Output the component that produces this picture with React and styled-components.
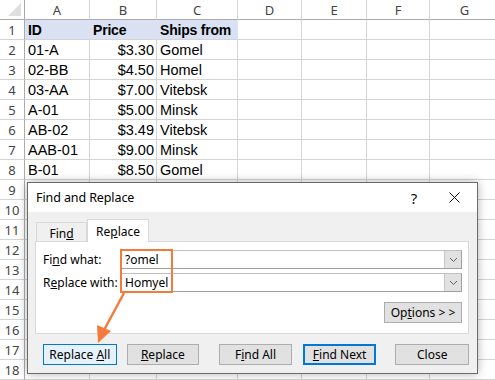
import styled, { createGlobalStyle } from 'styled-components'

const GlobalStyle = createGlobalStyle`
    html, body {
        margin: 0;
        padding: 0;
        background: #ffffff;
    }
    * {
        box-sizing: border-box;
    }
`

const columns = [
    { name: 'A', width: 65 },
    { name: 'B', width: 67 },
    { name: 'C', width: 81 },
    { name: 'D', width: 64 },
    { name: 'E', width: 65 },
    { name: 'F', width: 63 },
    { name: 'G', width: 70 },
]

const data = [
    ['01-A', '$3.30', 'Gomel'],
    ['02-BB', '$4.50', 'Homel'],
    ['03-AA', '$7.00', 'Vitebsk'],
    ['A-01', '$5.00', 'Minsk'],
    ['AB-02', '$3.49', 'Vitebsk'],
    ['AAB-01', '$9.00', 'Minsk'],
    ['B-01', '$8.50', 'Gomel'],
]

const Page = styled.div`
    position: relative;
    width: 495px;
    height: 380px;
    overflow: hidden;
    font-family: "Liberation Sans", Arial, sans-serif;
`

const Sheet = styled.div`
    display: grid;
    grid-template-columns: 25px ${columns.map(c => c.width + 'px').join(' ')};
    grid-auto-rows: 20px;
`

const Corner = styled.div`
    position: relative;
    border-right: 1px solid #ababab;
    border-bottom: 1px solid #ababab;
    &::after {
        content: '';
        position: absolute;
        right: 3px;
        bottom: 3px;
        border-left: 13px solid transparent;
        border-bottom: 13px solid #dfdfdf;
    }
`

const ColHead = styled.div`
    display: flex;
    align-items: center;
    justify-content: center;
    font-family: "Noto Sans", sans-serif;
    font-size: 13px;
    color: #444;
    border-right: 1px solid #d4d4d4;
    border-bottom: 1px solid #ababab;
`

const RowHead = styled.div`
    display: flex;
    align-items: center;
    justify-content: center;
    font-family: "Noto Sans", sans-serif;
    font-size: 13px;
    color: #444;
    border-right: 1px solid #ababab;
    border-bottom: 1px solid #d4d4d4;
`

const Cell = styled.div`
    display: flex;
    align-items: center;
    justify-content: ${p => (p.$right ? 'flex-end' : 'flex-start')};
    padding: 0 2px 0 3px;
    font-size: ${p => (p.$head ? 14 : 14.5)}px;
    font-weight: ${p => (p.$head ? 700 : 400)};
    letter-spacing: ${p => (p.$head ? -0.2 : 0)}px;
    color: #000;
    background: ${p => (p.$head ? '#d9e1f2' : '#fff')};
    border-right: 1px solid ${p => (p.$head ? '#d9e1f2' : '#d4d4d4')};
    border-bottom: 1px solid #d4d4d4;
    white-space: nowrap;
    overflow: hidden;
`

const Dialog = styled.div`
    position: absolute;
    left: 27px;
    top: 182px;
    width: 451px;
    height: 192px;
    background: #f0f0f0;
    border: 1px solid #6b6b6b;
    box-shadow: 0 0 9px rgba(0, 0, 0, 0.3);
    display: flex;
    flex-direction: column;
    font-family: "Noto Sans", "Segoe UI", sans-serif;
    font-size: 12px;
    color: #000;
`

const TitleBar = styled.div`
    height: 29px;
    background: #fff;
    display: flex;
    align-items: center;
    padding: 0 0 0 8px;
`

const Title = styled.div`
    flex: 1;
    font-size: 12.5px;
    letter-spacing: -0.1px;
`

const TitleButton = styled.div`
    width: 40px;
    height: 29px;
    display: flex;
    align-items: center;
    justify-content: center;
    font-size: 15px;
    color: #111;
    margin-right: ${p => p.$mr || 0}px;
`

const Body = styled.div`
    flex: 1;
    padding: 7px 8px 0 7px;
    display: flex;
    flex-direction: column;
`

const Tabs = styled.div`
    display: flex;
    align-items: flex-end;
    height: 22px;
    padding-left: 1px;
`

const Tab = styled.div`
    height: ${p => (p.$active ? 23 : 19)}px;
    width: ${p => p.$w}px;
    display: flex;
    align-items: center;
    justify-content: center;
    padding-top: ${p => (p.$active ? 0 : 2)}px;
    background: ${p => (p.$active ? '#fff' : '#f0f0f0')};
    border: 1px solid #d9d9d9;
    border-bottom: none;
    margin-bottom: ${p => (p.$active ? -1 : 0)}px;
    position: relative;
    z-index: ${p => (p.$active ? 1 : 0)};
`

const Panel = styled.div`
    height: 93px;
    background: #fff;
    border: 1px solid #d9d9d9;
    padding: 8px 6px 0 7px;
    display: flex;
    flex-direction: column;
    gap: 4px;
`

const FieldRow = styled.div`
    display: flex;
    align-items: center;
    height: 19px;
`

const Label = styled.div`
    width: 77px;
    flex-shrink: 0;
`

const Field = styled.div`
    flex: 1;
    height: 19px;
    display: flex;
    border: 1px solid #a0a0a0;
    border-top-color: #c0c0c0;
    background: #fff;
`

const FieldText = styled.div`
    flex: 1;
    padding-left: 4px;
    display: flex;
    align-items: center;
    font-size: 12px;
`

const DropButton = styled.div`
    width: 17px;
    background: #e1e1e1;
    border-left: 1px solid #c8c8c8;
    display: flex;
    align-items: center;
    justify-content: center;
`

const OptionsRow = styled.div`
    display: flex;
    justify-content: flex-end;
    margin-top: 6px;
`

const Button = styled.div`
    width: ${p => p.$w || 74}px;
    height: 21px;
    margin-left: ${p => p.$ml || 0}px;
    display: flex;
    align-items: center;
    justify-content: center;
    background: ${p => (p.$hover ? '#e5f1fb' : '#e1e1e1')};
    border: ${p => (p.$default ? '2px solid #0078d7' : p.$hover ? '1px solid #0078d7' : '1px solid #adadad')};
    font-size: 12px;
    white-space: nowrap;
`

const ButtonRow = styled.div`
    display: flex;
    padding: 10px 0 0 8px;
`

const Overlay = styled.svg`
    position: absolute;
    left: 0;
    top: 0;
    pointer-events: none;
`

const Chevron = () => (
    <svg width="9" height="6" viewBox="0 0 9 6">
        <path d="M1 1 L4.5 4.5 L8 1" fill="none" stroke="#606060" strokeWidth="1" />
    </svg>
)

const App = () => {
    const rows = []
    for (let r = 1; r <= 18; r++) {
        const values = r === 1 ? ['ID', 'Price', 'Ships from'] : data[r - 2] || []
        rows.push(<RowHead key={'h' + r}>{r}</RowHead>)
        columns.forEach((c, i) => {
            const v = values[i] || ''
            rows.push(
                <Cell key={r + c.name} $head={r === 1 && i < 3} $right={r > 1 && i === 1}>
                    {v}
                </Cell>
            )
        })
    }

    return (
        <Page>
            <GlobalStyle />
            <Sheet>
                <Corner />
                {columns.map(c => (
                    <ColHead key={c.name}>{c.name}</ColHead>
                ))}
                {rows}
            </Sheet>

            <Dialog>
                <TitleBar>
                    <Title>Find and Replace</Title>
                    <TitleButton>?</TitleButton>
                    <TitleButton $mr={3}>
                        <svg width="11" height="11" viewBox="0 0 11 11">
                            <path d="M0.5 0.5 L10.5 10.5 M10.5 0.5 L0.5 10.5" stroke="#111" strokeWidth="1" />
                        </svg>
                    </TitleButton>
                </TitleBar>
                <Body>
                    <Tabs>
                        <Tab $w={51}><span>Fin<u>d</u></span></Tab>
                        <Tab $w={62} $active><span>Re<u>p</u>lace</span></Tab>
                    </Tabs>
                    <Panel>
                        <FieldRow>
                            <Label>Fi<u>n</u>d what:</Label>
                            <Field>
                                <FieldText>?omel</FieldText>
                                <DropButton><Chevron /></DropButton>
                            </Field>
                        </FieldRow>
                        <FieldRow>
                            <Label>R<u>e</u>place with:</Label>
                            <Field>
                                <FieldText>Homyel</FieldText>
                                <DropButton><Chevron /></DropButton>
                            </Field>
                        </FieldRow>
                        <OptionsRow>
                            <Button $w={78}><span>Op<u>t</u>ions &gt; &gt;</span></Button>
                        </OptionsRow>
                    </Panel>
                    <ButtonRow>
                        <Button $hover><span>Replace <u>A</u>ll</span></Button>
                        <Button $w={73} $ml={10}><span><u>R</u>eplace</span></Button>
                        <Button $w={73} $ml={20}><span>F<u>i</u>nd All</span></Button>
                        <Button $ml={11} $default><span><u>F</u>ind Next</span></Button>
                        <Button $ml={19}><span>Close</span></Button>
                    </ButtonRow>
                </Body>
            </Dialog>

            <Overlay width="495" height="380">
                <rect x="121" y="250" width="51" height="42" fill="none" stroke="#f47b3d" strokeWidth="2" />
                <line x1="124" y1="293" x2="103" y2="332" stroke="#f47b3d" strokeWidth="2.5" />
                <polygon points="98,343 97,325 111,331" fill="#f47b3d" />
            </Overlay>
        </Page>
    )
}

export default App
